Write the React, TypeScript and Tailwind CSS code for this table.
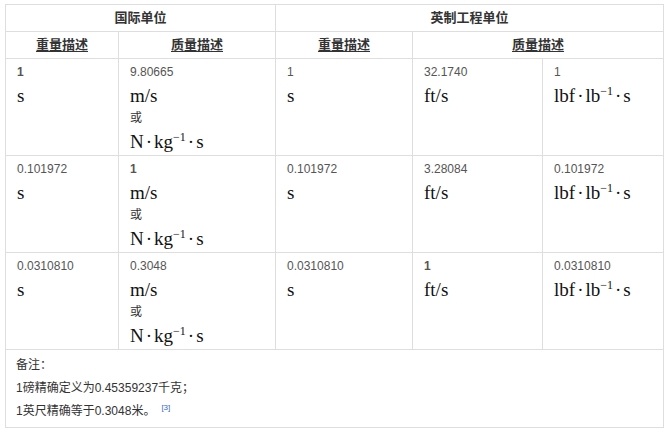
import React from "react"

const cell = "border border-[#dedede] align-top pl-[11px] pt-[2px] pb-0 pr-1"
const num = "text-[12px] leading-[23px] text-[#555]"
const math = "font-['Liberation_Serif',serif] text-[19px] leading-[23px] text-[#111]"
const head = "border border-[#dedede] text-center align-middle p-0 text-[13px] font-bold text-[#333]"

function Sup() {
  return <span className="align-super text-[12px] leading-none">−1</span>
}

function Nkg() {
  return (
    <div className={math}>
      N<span className="px-[2px]">·</span>kg
      <Sup />
      <span className="px-[2px]">·</span>s
    </div>
  )
}

function Lbf() {
  return (
    <div className={math}>
      lbf<span className="px-[2px]">·</span>lb
      <Sup />
      <span className="px-[2px]">·</span>s
    </div>
  )
}

function Metric({ value, bold }: { value: string; bold?: boolean }) {
  return (
    <td className={cell}>
      <div className={bold ? num + " font-bold" : num}>{value}</div>
      <div className={math}>m/s</div>
      <div className="text-[12px] leading-[23px] text-[#333]">或</div>
      <Nkg />
    </td>
  )
}

function Simple({ value, bold, unit }: { value: string; bold?: boolean; unit: string }) {
  return (
    <td className={cell}>
      <div className={bold ? num + " font-bold" : num}>{value}</div>
      <div className={math}>{unit}</div>
    </td>
  )
}

function LbfCell({ value }: { value: string }) {
  return (
    <td className={cell}>
      <div className={num}>{value}</div>
      <Lbf />
    </td>
  )
}

const rows = [
  { w: "1", wb: true, m: "9.80665", mb: false, e: "1", f: "32.1740", fb: false, l: "1" },
  { w: "0.101972", wb: false, m: "1", mb: true, e: "0.101972", f: "3.28084", fb: false, l: "0.101972" },
  { w: "0.0310810", wb: false, m: "0.3048", mb: false, e: "0.0310810", f: "1", fb: true, l: "0.0310810" },
]

export default function App() {
  return (
    <div className="w-[669px] h-[432px] bg-white pl-[5px] pt-[4px] font-['Liberation_Sans','Noto_Sans_CJK_SC',sans-serif]">
      <table className="w-[658px] table-fixed border-collapse">
        <colgroup>
          <col className="w-[113px]" />
          <col className="w-[157px]" />
          <col className="w-[137px]" />
          <col className="w-[130px]" />
          <col className="w-[121px]" />
        </colgroup>
        <tbody>
          <tr className="h-[27px]">
            <th colSpan={2} className={head}>国际单位</th>
            <th colSpan={3} className={head}>英制工程单位</th>
          </tr>
          <tr className="h-[27px]">
            <th className={head}><span className="underline underline-offset-2">重量描述</span></th>
            <th className={head}><span className="underline underline-offset-2">质量描述</span></th>
            <th className={head}><span className="underline underline-offset-2">重量描述</span></th>
            <th colSpan={2} className={head}><span className="underline underline-offset-2">质量描述</span></th>
          </tr>
          {rows.map((r) => (
            <tr key={r.w} className="h-[97px]">
              <Simple value={r.w} bold={r.wb} unit="s" />
              <Metric value={r.m} bold={r.mb} />
              <Simple value={r.e} unit="s" />
              <Simple value={r.f} bold={r.fb} unit="ft/s" />
              <LbfCell value={r.l} />
            </tr>
          ))}
          <tr className="h-[78px]">
            <td colSpan={5} className="border border-[#dedede] align-top pl-[10px] pt-[4px] text-[12px] leading-[23px] text-[#333]">
              <div>备注：</div>
              <div>1磅精确定义为0.45359237千克；</div>
              <div>
                1英尺精确等于0.3048米。
                <span className="ml-[6px] align-super text-[8px] leading-none text-[#3366cc]">[3]</span>
              </div>
            </td>
          </tr>
        </tbody>
      </table>
    </div>
  )
}
